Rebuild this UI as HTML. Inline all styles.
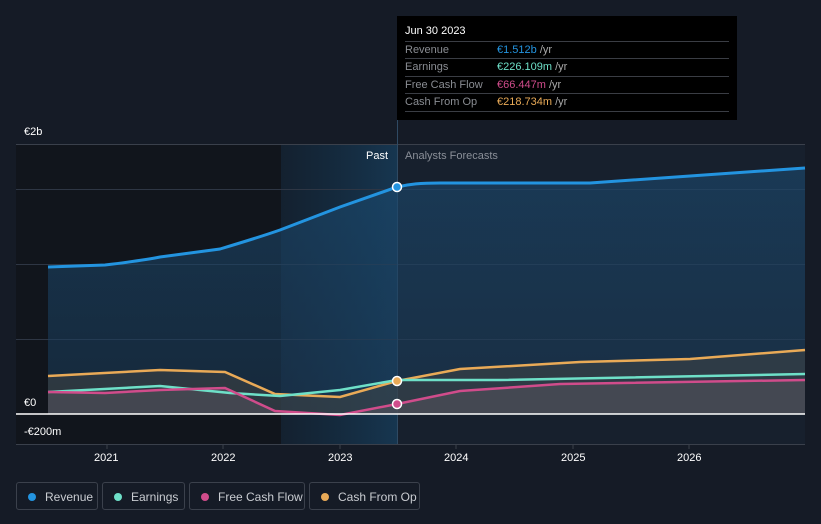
<!DOCTYPE html>
<html><head><meta charset="utf-8"><style>
body{margin:0;width:821px;height:524px;background:#151b26;overflow:hidden;font-family:"Liberation Sans",sans-serif;position:relative}
.t{position:absolute;color:#fff;font-size:11px}
.tip{position:absolute;left:397px;top:16px;width:340px;height:104px;background:#000;}
.tip .h{position:absolute;left:8px;top:9px;color:#fff;font-size:11px}
.row{position:absolute;left:8px;width:324px;height:17px;border-top:1px solid #3a3d44;font-size:11px;line-height:17px;color:#8a8d93}
.row span{position:absolute;left:92px}
.row i{font-style:normal;color:#aaa}
.leg{position:absolute;top:482px;height:28px;border:1px solid #3b414c;border-radius:3px;color:#c9ccd1;font-size:12px;line-height:28px;box-sizing:border-box}
.leg b{position:absolute;left:11px;top:10px;width:8px;height:8px;border-radius:50%}
.leg span{position:absolute;left:28px}
</style></head><body>
<svg width="821" height="524" style="position:absolute;left:0;top:0">
<defs>
<linearGradient id="hl" x1="0" x2="1"><stop offset="0" stop-color="#15293d" stop-opacity=".6"/><stop offset="1" stop-color="#163650"/></linearGradient>
<linearGradient id="rv" x1="0" y1="0" x2="0" y2="1"><stop offset="0" stop-color="#1b4a70" stop-opacity=".8"/><stop offset="1" stop-color="#1b3b58" stop-opacity=".7"/></linearGradient>
</defs>
<rect x="16" y="144" width="381" height="300" fill="#11151c"/>
<rect x="281" y="144" width="116" height="300" fill="url(#hl)"/>
<rect x="397" y="144" width="408" height="300" fill="#17202d"/>
<g stroke="#2e3644" stroke-width="1">
<line x1="16" y1="144.5" x2="805" y2="144.5" stroke="#3a404b"/>
<line x1="16" y1="189.5" x2="805" y2="189.5"/>
<line x1="16" y1="264.5" x2="805" y2="264.5"/>
<line x1="16" y1="339.5" x2="805" y2="339.5"/>
</g>
<line x1="397.5" y1="16" x2="397.5" y2="444" stroke="#2f4a63"/>
<path d="M48,267 L105,265 C130,262 150,259 160,257 L220,249 C240,243 260,237 280,230 L340,207 L397,187 C410,184 420,183 440,183 L590,183 L690,176 L805,168 L805,414 L48,414Z" fill="url(#rv)" opacity=".75"/>
<path d="M48,376 L160,370 L225,372 L275,394 L340,397 L397,381 L460,369 L580,362 L690,359 L805,350 L805,414 L48,414Z" fill="#4a4a45" opacity=".45"/>
<path d="M48,392 L105,393 L160,390 L225,388 L275,411 L340,415 L397,404 L460,391 L560,384 L805,380 L805,414 L48,414Z" fill="#5a5560" opacity=".5"/>
<path d="M48,267 L105,265 C130,262 150,259 160,257 L220,249 C240,243 260,237 280,230 L340,207 L397,187 C410,184 420,183 440,183 L590,183 L690,176 L805,168" fill="none" stroke="#2394e0" stroke-width="3"/>
<path d="M48,376 L160,370 L225,372 L275,394 L340,397 L397,381 L460,369 L580,362 L690,359 L805,350" fill="none" stroke="#e9aa57" stroke-width="2.5"/>
<path d="M48,392 L160,386 L230,393 L280,396 L340,390 L397,380 L500,380 L805,374" fill="none" stroke="#6ee0c8" stroke-width="2.5"/>
<path d="M48,392 L105,393 L160,390 L225,388 L275,411 L340,415 L397,404 L460,391 L560,384 L805,380" fill="none" stroke="#d04c8b" stroke-width="2.5"/>
<line x1="16" y1="414" x2="805" y2="414" stroke="#fff" stroke-width="1.5"/>
<line x1="16" y1="444.5" x2="805" y2="444.5" stroke="#3a404b"/>
<g stroke="#3a404b"><line x1="107" y1="444" x2="107" y2="449"/><line x1="223" y1="444" x2="223" y2="449"/><line x1="340" y1="444" x2="340" y2="449"/><line x1="456" y1="444" x2="456" y2="449"/><line x1="573" y1="444" x2="573" y2="449"/><line x1="689" y1="444" x2="689" y2="449"/></g>
<circle cx="397" cy="187" r="4.5" fill="#2394e0" stroke="#fff" stroke-width="1.5"/>
<circle cx="397" cy="381" r="4.5" fill="#e9aa57" stroke="#fff" stroke-width="1.5"/>
<circle cx="397" cy="404" r="4.5" fill="#d04c8b" stroke="#fff" stroke-width="1.5"/>
</svg>
<div class="t" style="left:24px;top:126px">€2b</div>
<div class="t" style="left:24px;top:397px">€0</div>
<div class="t" style="left:24px;top:426px">-€200m</div>
<div class="t" style="left:366px;top:150px">Past</div>
<div class="t" style="left:405px;top:150px;color:#8a8f98">Analysts Forecasts</div>
<div class="t" style="left:94px;top:452px">2021</div>
<div class="t" style="left:211px;top:452px">2022</div>
<div class="t" style="left:328px;top:452px">2023</div>
<div class="t" style="left:444px;top:452px">2024</div>
<div class="t" style="left:561px;top:452px">2025</div>
<div class="t" style="left:677px;top:452px">2026</div>
<div class="tip">
<div class="h">Jun 30 2023</div>
<div class="row" style="top:25px">Revenue<span><em style="font-style:normal;color:#2394e0">€1.512b</em> <i>/yr</i></span></div>
<div class="row" style="top:42px">Earnings<span><em style="font-style:normal;color:#6ee0c8">€226.109m</em> <i>/yr</i></span></div>
<div class="row" style="top:60px">Free Cash Flow<span><em style="font-style:normal;color:#d04c8b">€66.447m</em> <i>/yr</i></span></div>
<div class="row" style="top:77px">Cash From Op<span><em style="font-style:normal;color:#e9aa57">€218.734m</em> <i>/yr</i></span></div>
<div class="row" style="top:95px;height:0"></div>
</div>
<div class="leg" style="left:16px;width:82px"><b style="background:#2394e0"></b><span>Revenue</span></div>
<div class="leg" style="left:102px;width:83px"><b style="background:#6ee0c8"></b><span>Earnings</span></div>
<div class="leg" style="left:189px;width:116px"><b style="background:#d04c8b"></b><span>Free Cash Flow</span></div>
<div class="leg" style="left:309px;width:111px"><b style="background:#e9aa57"></b><span>Cash From Op</span></div>
</body></html>
